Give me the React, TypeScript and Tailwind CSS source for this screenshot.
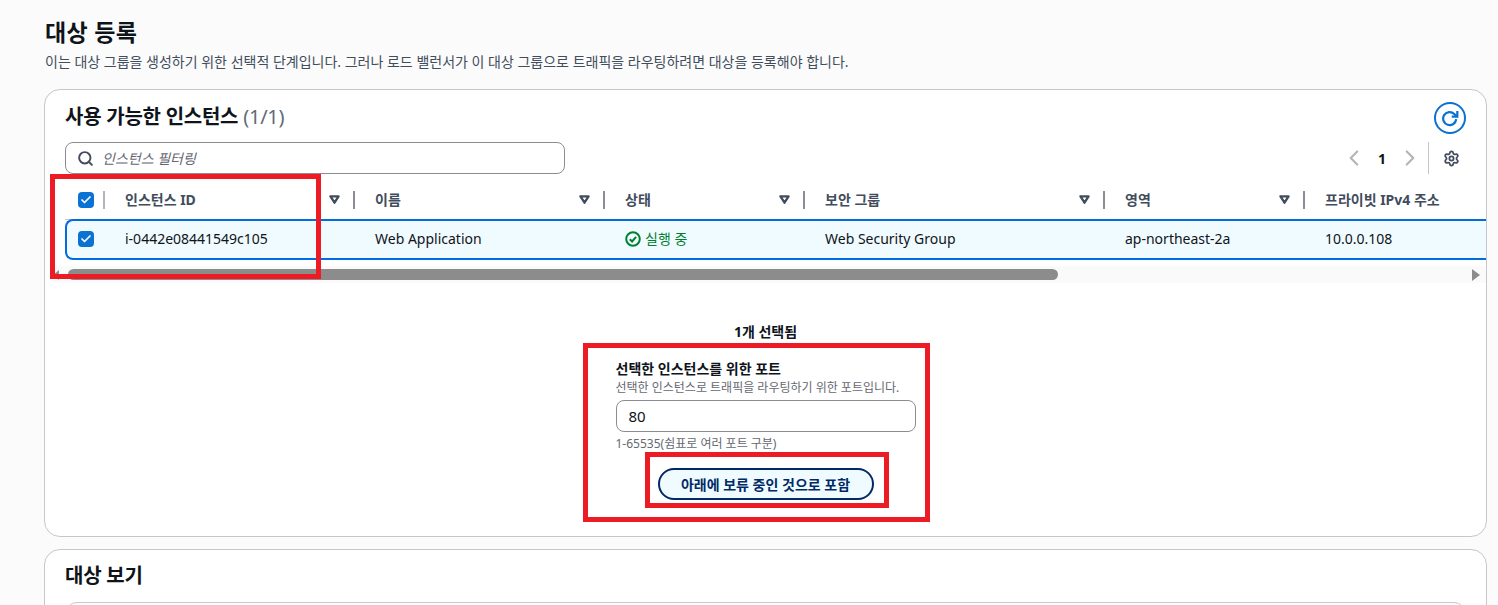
import { Search, ChevronLeft, ChevronRight, Settings, Check } from 'lucide-react';

const columns = [
    { label: '인스턴스 ID', width: 'w-[250px]', value: 'i-0442e08441549c105' },
    { label: '이름', width: 'w-[250px]', value: 'Web Application' },
    { label: '상태', width: 'w-[200px]', value: '' },
    { label: '보안 그룹', width: 'w-[300px]', value: 'Web Security Group' },
    { label: '영역', width: 'w-[200px]', value: 'ap-northeast-2a' },
];

const CheckBox = () => (
    <div className="w-4 h-4 rounded-[4px] bg-[#0972d3] flex items-center justify-center">
        <Check className="w-3 h-3 text-white" strokeWidth={3.5} />
    </div>
);

const SortIcon = () => (
    <svg viewBox="0 0 12 10" className="w-[11px] h-[9px] text-[#414d5c]" fill="none" stroke="currentColor" strokeWidth="2.6">
        <path d="M1.5 1.5h9L6 8.5z" strokeLinejoin="round" />
    </svg>
);

const RedBox = ({ className }: { className: string }) => (
    <div className={`absolute border-[5px] border-[#ed1c24] pointer-events-none ${className}`}></div>
);

const App = () => {
    return (
        <div className="relative h-screen overflow-hidden bg-[#fbfbfb] pl-[44px] pr-[11px] pt-[17px] font-['Noto_Sans','Noto_Sans_CJK_KR',sans-serif] text-[#000716]">
            <h1 className="pl-px text-[23px] leading-[30px] font-bold tracking-[0.3px] text-[#0f141a]">대상 등록</h1>
            <p className="pl-px mt-[4px] text-[14px] leading-[22px] text-[#414d5c]">
                이는 대상 그룹을 생성하기 위한 선택적 단계입니다. 그러나 로드 밸런서가 이 대상 그룹으로 트래픽을 라우팅하려면 대상을 등록해야 합니다.
            </p>

            {/* Available instances */}
            <div className="mt-[16px] h-[448px] bg-white rounded-[16px] border border-[#c6c6cd] overflow-hidden">
                <div className="h-[52px] pl-[20px] pr-[20px] pt-[12px] flex items-start justify-between">
                    <h2 className="text-[20px] leading-[30px] font-bold tracking-[-0.25px] text-[#0f141a]">
                        사용 가능한 인스턴스 <span className="font-normal text-[#5f6b7a]">(1/1)</span>
                    </h2>
                    <div className="w-8 h-8 rounded-full border-2 border-[#0972d3] flex items-center justify-center">
                        <svg viewBox="0 0 16 16" className="w-[18px] h-[18px] text-[#0972d3]" fill="none" stroke="currentColor" strokeWidth="2">
                            <path d="M13.5 9a5.8 5.8 0 1 1-1.7-4.6L14 6.5" />
                            <path d="M14.5 1.8v5h-5" />
                        </svg>
                    </div>
                </div>

                <div className="h-[38px] pl-[20px] pr-[26px] flex items-start justify-between">
                    <div className="w-[500px] h-[32px] rounded-lg border border-[#8c8c94] flex items-center pl-[11px] gap-[8px]">
                        <Search className="w-[17px] h-[17px] text-[#414d5c]" strokeWidth={2.75} />
                        <span className="text-[14px] italic text-[#656871]">인스턴스 필터링</span>
                    </div>
                    <div className="flex items-center h-[32px] text-[#414d5c]">
                        <ChevronLeft className="w-[26px] h-[26px] text-[#b4b4bb]" strokeWidth={2} />
                        <span className="w-[30px] text-center text-[14px] font-bold text-[#0f141a]">1</span>
                        <ChevronRight className="w-[26px] h-[26px] text-[#b4b4bb]" strokeWidth={2} />
                        <div className="w-px h-[32px] bg-[#c6c6cd] ml-[5px] mr-[14px]"></div>
                        <Settings className="w-[17px] h-[17px]" strokeWidth={2.5} />
                    </div>
                </div>

                {/* Table header */}
                <div className="ml-[20px] flex h-[40px] items-center text-[14px] font-bold text-[#414d5c] border-b border-[#c6c6cd]">
                    <div className="w-[40px] h-full flex items-center justify-between pl-[13px]">
                        <CheckBox />
                        <div className="w-[2px] h-[18px] bg-[#b4b4bb]"></div>
                    </div>
                    {columns.map((col) => (
                        <div key={col.label} className={`${col.width} h-full shrink-0 flex items-center justify-between pl-[20px]`}>
                            <span>{col.label}</span>
                            <div className="flex items-center gap-[13px]">
                                <SortIcon />
                                <div className="w-[2px] h-[18px] bg-[#8c8c94]"></div>
                            </div>
                        </div>
                    ))}
                    <div className="pl-[20px] whitespace-nowrap">프라이빗 IPv4 주소</div>
                </div>

                {/* Selected row */}
                <div className="ml-[20px] -mt-px h-[41px] pb-[2px] flex items-center text-[14px] text-[#0f141a] bg-[#f0fbff] border-2 border-r-0 border-[#006ce0] rounded-l-[8px]">
                    <div className="w-[38px] pl-[11px] shrink-0">
                        <CheckBox />
                    </div>
                    {columns.map((col) => (
                        <div key={col.label} className={`${col.width} shrink-0 pl-[20px]`}>
                            {col.label === '상태' ? (
                                <span className="flex items-center gap-[4px] text-[#00802f]">
                                    <svg viewBox="0 0 16 16" className="w-4 h-4" fill="none" stroke="currentColor" strokeWidth="2">
                                        <circle cx="8" cy="8" r="6.8" />
                                        <path d="M4.8 8.2l2.3 2.3 4-4.6" />
                                    </svg>
                                    실행 중
                                </span>
                            ) : (
                                col.value
                            )}
                        </div>
                    ))}
                    <div className="pl-[20px]">10.0.0.108</div>
                </div>

                {/* Horizontal scrollbar */}
                <div className="mt-[6px] h-[17px] ml-[7px] bg-[#fafafa] flex items-center">
                    <div className="w-0 h-0 ml-[1px] border-y-[5px] border-y-transparent border-r-[6px] border-r-[#8c8c8c]"></div>
                    <div className="ml-[9px] w-[990px] h-[11px] rounded-full bg-[#8c8c8c]"></div>
                    <div className="ml-auto mr-[6px] w-0 h-0 border-y-[6px] border-y-transparent border-l-[8px] border-l-[#8c8c8c]"></div>
                </div>

                {/* Selected port form */}
                <div className="mt-[41px] flex flex-col items-center">
                    <div className="text-[14px] leading-[16px] font-bold text-[#0f141a]">1개 선택됨</div>
                    <div className="mt-[19px] w-[300px]">
                        <div className="text-[14px] leading-[20px] font-bold text-[#0f141a]">선택한 인스턴스를 위한 포트</div>
                        <div className="mt-[2px] text-[12px] leading-[14px] text-[#656871]">선택한 인스턴스로 트래픽을 라우팅하기 위한 포트입니다.</div>
                        <div className="mt-[5px] h-[32px] rounded-lg border border-[#8c8c94] flex items-center pl-[12px] text-[15px] text-[#0f141a]">80</div>
                        <div className="mt-[4px] text-[12px] leading-[16px] text-[#656871]">1-65535(쉼표로 여러 포트 구분)</div>
                        <div className="mt-[16px] mx-auto w-[216px] h-[32px] rounded-full border-2 border-[#002a66] bg-[#f0fbff] flex items-center justify-center text-[14px] font-bold text-[#002a66]">
                            아래에 보류 중인 것으로 포함
                        </div>
                    </div>
                </div>
            </div>

            {/* View targets */}
            <div className="mt-[12px] h-[120px] bg-white rounded-[16px] border border-[#c6c6cd] pl-[20px] pr-[20px] pt-[11px]">
                <h2 className="text-[20px] leading-[30px] font-bold tracking-[-0.25px] text-[#0f141a]">대상 보기</h2>
                <div className="mt-[11px] h-[60px] rounded-[12px] border border-[#c6c6cd]"></div>
            </div>

            {/* Annotation boxes */}
            <RedBox className="left-[50px] top-[174px] w-[271px] h-[105px]" />
            <RedBox className="left-[583px] top-[343px] w-[347px] h-[179px]" />
            <RedBox className="left-[645px] top-[452px] w-[244px] h-[56px]" />
        </div>
    );
};

export default App;
